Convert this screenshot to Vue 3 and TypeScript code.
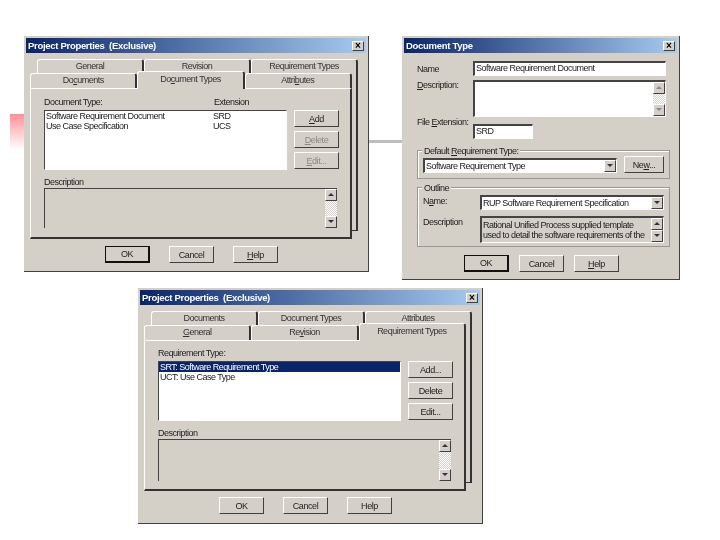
<script setup lang="ts">
import { h } from 'vue'

// "&" marks the access-key letter of a Windows label
const Mn = (p: { t: string }) => {
  const i = p.t.indexOf('&')
  if (i < 0) return p.t
  return [p.t.slice(0, i), h('u', p.t[i + 1]), p.t.slice(i + 2)]
}
Mn.props = ['t']

interface Sheet {
  id: string
  back: string[]
  front: string[]
  active: number
  label: string
  ext: string
  rows: { name: string; ext: string; sel?: boolean }[]
  actions: { t: string; off?: boolean }[]
  plainFoot: boolean
}

const sheets: Sheet[] = [
  {
    id: 'one',
    back: ['General', 'Revision', 'Requirement Types'],
    front: ['Do&cuments', 'Do&cument Types', 'Attri&butes'],
    active: 1,
    label: 'Document Type:',
    ext: 'Extension',
    rows: [
      { name: 'Software Requirement Document', ext: 'SRD' },
      { name: 'Use Case Specification', ext: 'UCS' },
    ],
    actions: [{ t: '&Add' }, { t: '&Delete', off: true }, { t: '&Edit...', off: true }],
    plainFoot: false,
  },
  {
    id: 'three',
    back: ['Documents', 'Document Types', 'Attributes'],
    front: ['&General', 'Re&vision', 'Requirement Types'],
    active: 2,
    label: 'Requirement Type:',
    ext: '',
    rows: [
      { name: 'SRT: Software Requirement Type', ext: '', sel: true },
      { name: 'UCT: Use Case Type', ext: '' },
    ],
    actions: [{ t: 'Add...' }, { t: 'Delete' }, { t: 'Edit...' }],
    plainFoot: true,
  },
]
</script>

<template>
  <main class="desk">
    <div class="flare"></div>
    <div class="wire"></div>

    <section v-for="s in sheets" :key="s.id" class="win sheet" :class="s.id">
      <header class="title">
        <span>Project Properties&nbsp; (Exclusive)</span>
        <i class="close">×</i>
      </header>
      <div class="stack">
        <div class="backleaf"></div>
        <div class="tabs backtabs">
          <div v-for="t in s.back" :key="t" class="tab"><Mn :t="t" /></div>
        </div>
        <div class="tabs fronttabs">
          <div v-for="(t, i) in s.front" :key="t" class="tab" :class="{ on: i === s.active }"><Mn :t="t" /></div>
        </div>
        <div class="panel">
          <div class="labels">
            <span class="lname">{{ s.label }}</span>
            <span>{{ s.ext }}</span>
          </div>
          <div class="listrow">
            <ul class="list sunken">
              <li v-for="r in s.rows" :key="r.name" :class="{ sel: r.sel }">
                <span class="rname">{{ r.name }}</span><span>{{ r.ext }}</span>
              </li>
            </ul>
            <div class="acts">
              <button v-for="a in s.actions" :key="a.t" class="btn" :class="{ off: a.off }"><Mn :t="a.t" /></button>
            </div>
          </div>
          <div class="desclabel">Description</div>
          <div class="descbox">
            <div class="scroll">
              <b class="sb up"></b><b class="track"></b><b class="sb down"></b>
            </div>
          </div>
        </div>
      </div>
      <footer class="foot">
        <button class="btn" :class="{ def: !s.plainFoot }">OK</button>
        <button class="btn">Cancel</button>
        <button class="btn"><Mn :t="s.plainFoot ? 'Help' : '&Help'" /></button>
      </footer>
    </section>

    <section class="win doc">
      <header class="title">
        <span>Document Type</span>
        <i class="close">×</i>
      </header>
      <div class="form">
        <div class="frow">
          <label>Name</label>
          <div class="field sunken wide">Software Requirement Document</div>
        </div>
        <div class="frow r2">
          <label><Mn t="&Description:" /></label>
          <div class="field sunken wide tall">
            <div class="scroll dim">
              <b class="sb up"></b><b class="track"></b><b class="sb down"></b>
            </div>
          </div>
        </div>
        <div class="frow r3">
          <label><Mn t="File &Extension:" /></label>
          <div class="field sunken short">SRD</div>
        </div>

        <fieldset class="grp g1">
          <span class="legend">Default <u>R</u>equirement Type:</span>
          <div class="gline">
            <div class="combo sunken c1">Software Requirement Type<b class="sb down"></b></div>
            <button class="btn"><Mn t="Ne&w..." /></button>
          </div>
        </fieldset>

        <fieldset class="grp g2">
          <span class="legend">Outline</span>
          <div class="oline">
            <label><Mn t="N&ame:" /></label>
            <div class="combo sunken c2">RUP Software Requirement Specification<b class="sb down"></b></div>
          </div>
          <div class="oline o2">
            <label>Description</label>
            <div class="note sunken">
              <p>Rational Unified Process supplied template<br />used to detail the software requirements of the</p>
              <div class="spin"><b class="sb up"></b><b class="sb down"></b></div>
            </div>
          </div>
        </fieldset>
        <footer class="foot">
          <button class="btn def">OK</button>
          <button class="btn">Cancel</button>
          <button class="btn"><Mn t="&Help" /></button>
        </footer>
      </div>
    </section>
  </main>
</template>

<style scoped>
.desk {
  position: relative;
  width: 720px;
  height: 540px;
  overflow: hidden;
  background: #fff;
  font: 9px/12px "Liberation Sans", Arial, sans-serif;
  letter-spacing: -0.5px;
  color: #222;
  filter: blur(0.35px);
  white-space: nowrap;
}
.flare {
  position: absolute;
  left: 10px;
  top: 114px;
  width: 16px;
  height: 36px;
  background: linear-gradient(#ff8f96, #ffc4c8 45%, #fff);
}
.wire {
  position: absolute;
  left: 368px;
  top: 140px;
  width: 36px;
  height: 3px;
  background: #bdbdbd;
}
.win {
  position: absolute;
  box-sizing: border-box;
  padding: 2px;
  background: #d4d0c8;
  border-right: 1px solid #404040;
  border-bottom: 1px solid #404040;
}
.sheet { width: 345px; height: 236px; }
.sheet.one { left: 24px; top: 36px; }
.sheet.three { left: 138px; top: 288px; }
.doc { left: 402px; top: 36px; width: 278px; height: 244px; }

.title {
  display: flex;
  align-items: center;
  justify-content: space-between;
  height: 15px;
  padding: 0 2px;
  background: linear-gradient(90deg, #0a246a, #a6caf0);
  color: #fff;
  font: bold 9.5px/15px "Liberation Sans", sans-serif;
  letter-spacing: -0.3px;
}
.close {
  width: 12px;
  height: 10px;
  box-sizing: border-box;
  background: #d4d0c8;
  border: 1px solid;
  border-color: #fff #404040 #404040 #fff;
  color: #000;
  font: bold 10px/8px "Liberation Sans", sans-serif;
  letter-spacing: 0;
  text-align: center;
}

/* property sheet */
.stack {
  position: relative;
  width: 328px;
  margin: 6px 0 0 4px;
}
.backleaf {
  position: absolute;
  left: 7px;
  right: 0;
  top: 14px;
  height: 158px;
  border-right: 2px solid #333;
  border-bottom: 1px solid #333;
  box-sizing: border-box;
}
.tabs { position: relative; display: flex; }
.backtabs { height: 14px; padding-left: 7px; width: 328px; box-sizing: border-box; }
.fronttabs { height: 15px; width: 322px; }
.tab {
  flex: 1;
  box-sizing: border-box;
  background: #d4d0c8;
  border-top: 1px solid #fff;
  border-left: 1px solid #fff;
  border-right: 2px solid #333;
  border-radius: 3px 3px 0 0;
  text-align: center;
  line-height: 13px;
  color: #333;
}
.tab.on {
  position: relative;
  z-index: 1;
  margin-top: -2px;
  height: 18px;
  line-height: 15px;
}
.panel {
  position: relative;
  box-sizing: border-box;
  width: 322px;
  height: 151px;
  padding: 7px 0 0 13px;
  background: #d4d0c8;
  border: 1px solid;
  border-color: #fff #333 #333 #fff;
  border-width: 1px 2px 2px 1px;
}
.labels { display: flex; height: 14px; align-items: flex-start; }
.lname { width: 170px; }
.listrow { display: flex; gap: 7px; height: 60px; }
.sunken {
  box-sizing: border-box;
  background: #fff;
  border: 1px solid;
  border-color: #444 #fff #fff #444;
  border-width: 2px 1px 1px 2px;
}
.list {
  width: 243px;
  margin: 0;
  padding: 0;
  border-width: 1px;
  list-style: none;
  line-height: 10px;
}
.list li { display: flex; height: 10px; padding-left: 1px; color: #222; }
.rname { width: 167px; }
.list li.sel { background: #0a246a; color: #fff; }
.acts { display: flex; flex-direction: column; gap: 4px; }
.btn {
  box-sizing: border-box;
  width: 45px;
  height: 17px;
  padding: 0;
  background: #d4d0c8;
  border: 1px solid;
  border-color: #fff #404040 #404040 #fff;
  font: 9px/12px "Liberation Sans", Arial, sans-serif;
  letter-spacing: -0.4px;
  color: #222;
}
.btn.off { color: #8a8a84; }
.btn.def { border: 1px solid #111; border-width: 1px 2px 2px 1px; }
.desclabel { margin-top: 6px; height: 12px; }
.descbox {
  display: flex;
  justify-content: flex-end;
  box-sizing: border-box;
  width: 293px;
  height: 40px;
  border-top: 1px solid #444;
  border-left: 1px solid #444;
}
.scroll { display: flex; flex-direction: column; width: 12px; height: 100%; }
.scroll .track { flex: 1; }
.track {
  background: repeating-conic-gradient(#fff 0 25%, #d4d0c8 0 50%) 0 0 / 2px 2px;
}
.sb {
  position: relative;
  display: block;
  box-sizing: border-box;
  width: 12px;
  height: 12px;
  flex: none;
  background: #d4d0c8;
  border: 1px solid;
  border-color: #fff #404040 #404040 #fff;
}
.sb::after {
  content: "";
  position: absolute;
  left: 2px;
  top: 3px;
  border: 3px solid transparent;
  border-top: 0;
  border-bottom: 3px solid #333;
}
.sb.down::after {
  border-bottom: 0;
  border-top: 3px solid #333;
}
.dim .sb::after { opacity: 0.45; }
.foot {
  display: flex;
  gap: 19px;
  margin-top: 7px;
  padding-left: 79px;
}

.three .panel { padding-top: 6px; }
.three .descbox { height: 42px; }
.three .foot { margin-top: 6px; }

/* document type form */
.form { padding: 8px 0 0 13px; }
.frow { display: flex; align-items: center; }
.frow label { width: 56px; }
.r2 { margin-top: 4px; align-items: flex-start; }
.r2 label { margin-top: -1px; }
.r3 { margin-top: 7px; }
.r3 label { align-self: flex-start; margin-top: -8px; }
.field { line-height: 11px; padding-left: 1px; }
.wide { width: 193px; height: 15px; }
.tall { display: flex; justify-content: flex-end; height: 37px; padding: 0; }
.short { width: 60px; height: 15px; }
.grp {
  position: relative;
  box-sizing: border-box;
  width: 253px;
  margin: 0;
  padding: 0 5px;
  border: 1px solid #9a9890;
  box-shadow: inset 1px 1px #fff;
}
.legend {
  position: absolute;
  left: 4px;
  top: -6px;
  padding: 0 2px;
  background: #d4d0c8;
}
.g1 { height: 29px; margin-top: 11px; padding-top: 7px; }
.g2 { height: 60px; margin-top: 8px; padding-top: 7px; }
.gline { display: flex; gap: 7px; align-items: flex-start; }
.gline .btn { width: 40px; margin-top: -2px; }
.combo {
  position: relative;
  display: flex;
  align-items: center;
  justify-content: space-between;
  height: 15px;
  padding-left: 1px;
}
.c1 { width: 194px; }
.c2 { width: 184px; }
.oline { display: flex; }
.oline label { width: 57px; }
.o2 { margin-top: 6px; }
.note {
  display: flex;
  width: 184px;
  height: 27px;
  background: #d4d0c8;
}
.note p {
  flex: 1;
  margin: 2px 0 0 1px;
  line-height: 10px;
  overflow: hidden;
}
.spin { display: flex; flex-direction: column; width: 12px; }
.spin .sb { height: 12px; }
.doc .foot { margin-top: 8px; gap: 10px; padding-left: 47px; }
</style>
